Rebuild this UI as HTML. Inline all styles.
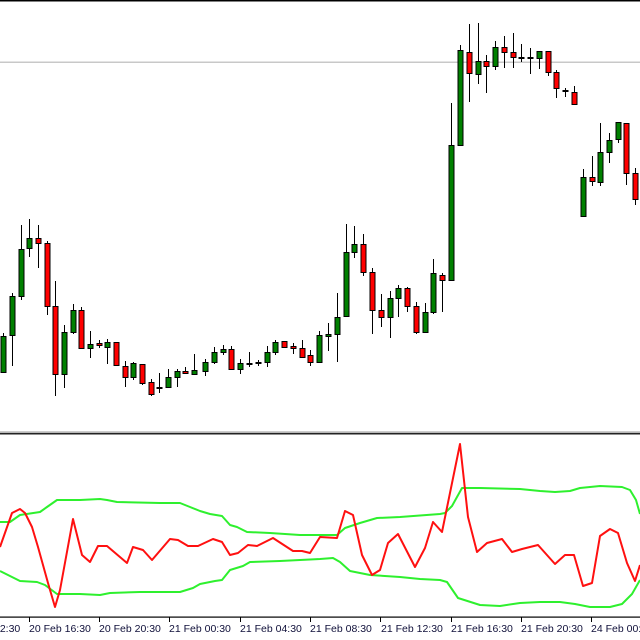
<!DOCTYPE html>
<html><head><meta charset="utf-8"><style>
html,body{margin:0;padding:0;background:#fff;width:640px;height:640px;overflow:hidden}
svg{display:block}
text{font-family:"Liberation Sans",sans-serif;font-size:10.5px;fill:#10103a}
</style></head><body>
<svg width="640" height="640" viewBox="0 0 640 640" xmlns="http://www.w3.org/2000/svg">
<rect x="0" y="0" width="640" height="1.5" fill="#000"/>
<rect x="0" y="61.5" width="640" height="1.5" fill="#c8c8c8"/>
<g stroke="#000" stroke-width="1" shape-rendering="crispEdges">
<path d="M3.5 333V373M12.5 293V366M21.5 225V300M29.5 219V257M38.5 225V268M47.5 241V315M55.5 281V396M64.5 325V388M73.5 304V334M81.5 307V349M90.5 331V358M99.5 340V348M107.5 339V364M116.5 342V365M125.5 361V387M133.5 362V380M142.5 364V385M151.5 379V396M159.5 373V393M168.5 369V388M177.5 369V387M185.5 367V374M194.5 354V375M205.5 359V376M214.5 347V364M223.5 345V355M231.5 346V369M240.5 359V374M249.5 352V367M258.5 360V366M267.5 346V367M275.5 340V355M284.5 341V347M293.5 343V354M302.5 340V357M310.5 350V366M319.5 331V362M328.5 323V351M337.5 293V362M346.5 224V316M354.5 226V258M363.5 234V276M372.5 268V334M381.5 294V327M390.5 291V338M398.5 285V317M407.5 287V312M416.5 302V334M425.5 303V332M433.5 259V314M442.5 273V312M451.5 103V280M460.5 45V145M469.5 24V102M478.5 23V84M486.5 55V93M495.5 41V70M504.5 36V68M513.5 33V68M521.5 44V62M530.5 48V74M539.5 51V69M548.5 51V76M556.5 70V98M565.5 88V97M574.5 86V105M583.5 169V217M592.5 156V186M600.5 123V186M609.5 133V163M618.5 122V143M626.5 123V185M635.5 168V205"/>
</g>
<g stroke="#000" stroke-width="1" fill="#008000" shape-rendering="crispEdges">
<rect x="1" y="336.5" width="5" height="36"/>
<rect x="10" y="296.5" width="5" height="39"/>
<rect x="19" y="249.5" width="5" height="47"/>
<rect x="27" y="238.5" width="5" height="10"/>
<rect x="62" y="332.5" width="5" height="42"/>
<rect x="71" y="310.5" width="5" height="22"/>
<rect x="88" y="344.5" width="5" height="4"/>
<rect x="105" y="342.5" width="5" height="5"/>
<rect x="131" y="363.5" width="5" height="14"/>
<rect x="157" y="387.5" width="5" height="1"/>
<rect x="166" y="377.5" width="5" height="10"/>
<rect x="175" y="371.5" width="5" height="6"/>
<rect x="192" y="370.5" width="5" height="4"/>
<rect x="203" y="362.5" width="5" height="9"/>
<rect x="212" y="352.5" width="5" height="10"/>
<rect x="221" y="349.5" width="5" height="3"/>
<rect x="238" y="363.5" width="5" height="6"/>
<rect x="247" y="363.5" width="5" height="1"/>
<rect x="256" y="362.5" width="5" height="1"/>
<rect x="265" y="352.5" width="5" height="10"/>
<rect x="273" y="342.5" width="5" height="10"/>
<rect x="317" y="335.5" width="5" height="27"/>
<rect x="326" y="334.5" width="5" height="2"/>
<rect x="335" y="317.5" width="5" height="17"/>
<rect x="344" y="252.5" width="5" height="64"/>
<rect x="352" y="244.5" width="5" height="8"/>
<rect x="388" y="298.5" width="5" height="19"/>
<rect x="396" y="288.5" width="5" height="10"/>
<rect x="423" y="312.5" width="5" height="20"/>
<rect x="431" y="273.5" width="5" height="39"/>
<rect x="449" y="145.5" width="5" height="135"/>
<rect x="458" y="50.5" width="5" height="95"/>
<rect x="476" y="61.5" width="5" height="13"/>
<rect x="493" y="47.5" width="5" height="19"/>
<rect x="519" y="57.5" width="5" height="1"/>
<rect x="537" y="51.5" width="5" height="7"/>
<rect x="563" y="90.5" width="5" height="1"/>
<rect x="581" y="177.5" width="5" height="39"/>
<rect x="598" y="152.5" width="5" height="30"/>
<rect x="607" y="140.5" width="5" height="12"/>
<rect x="616" y="122.5" width="5" height="17"/>
</g>
<g stroke="#000" stroke-width="1" fill="#ff0000" shape-rendering="crispEdges">
<rect x="36" y="238.5" width="5" height="5"/>
<rect x="45" y="243.5" width="5" height="63"/>
<rect x="53" y="306.5" width="5" height="68"/>
<rect x="79" y="310.5" width="5" height="38"/>
<rect x="97" y="343.5" width="5" height="2"/>
<rect x="114" y="342.5" width="5" height="23"/>
<rect x="123" y="366.5" width="5" height="11"/>
<rect x="140" y="364.5" width="5" height="19"/>
<rect x="149" y="382.5" width="5" height="12"/>
<rect x="183" y="371.5" width="5" height="2"/>
<rect x="229" y="349.5" width="5" height="20"/>
<rect x="282" y="341.5" width="5" height="6"/>
<rect x="291" y="346.5" width="5" height="2"/>
<rect x="300" y="348.5" width="5" height="9"/>
<rect x="308" y="355.5" width="5" height="7"/>
<rect x="361" y="244.5" width="5" height="28"/>
<rect x="370" y="272.5" width="5" height="38"/>
<rect x="379" y="310.5" width="5" height="7"/>
<rect x="405" y="288.5" width="5" height="18"/>
<rect x="414" y="306.5" width="5" height="26"/>
<rect x="440" y="275.5" width="5" height="5"/>
<rect x="467" y="52.5" width="5" height="21"/>
<rect x="484" y="61.5" width="5" height="5"/>
<rect x="502" y="47.5" width="5" height="5"/>
<rect x="511" y="52.5" width="5" height="5"/>
<rect x="528" y="57.5" width="5" height="1"/>
<rect x="546" y="51.5" width="5" height="21"/>
<rect x="554" y="72.5" width="5" height="16"/>
<rect x="572" y="92.5" width="5" height="12"/>
<rect x="590" y="177.5" width="5" height="4"/>
<rect x="624" y="123.5" width="5" height="50"/>
<rect x="633" y="173.5" width="5" height="26"/>
</g>
<rect x="0" y="431.5" width="640" height="1.2" fill="#9a9a9a"/>
<rect x="0" y="433" width="640" height="1.5" fill="#222"/>
<g fill="none" stroke-width="2" stroke-linejoin="round">
<polyline stroke="#2ef02e" points="0,522 10,522 20,515 40,512 47,507 57,500 80,500 100,499 107,500 117,502 160,503 180,503 190,507 200,511 210,514 222,516 230,525 237,527 247,532 270,533 300,535 320,535 337,535 345,528 360,523 377,518 400,517 440,514 445,513 452,506 462,488 480,488 520,489 540,491 555,492 570,491 580,488 600,486 622,487 630,490 636,500 640,514"/>
<polyline stroke="#2ef02e" points="0,571 20,581 37,582 45,585 57,594 80,594 100,595 110,593 140,592 180,592 193,588 200,584 215,581 222,580 230,570 243,566 250,562 280,561 300,560 320,559 333,558 340,562 350,571 370,575 400,577 420,579 440,580 447,582 458,598 480,605 500,606 520,603 540,602 560,602 575,604 590,607 610,607 622,604 632,594 640,580"/>
<polyline stroke="#ff1010" points="0,547 12,513 20,509 25,513 32,527 38,547 48,583 55,607 60,590 73,519 82,555 90,562 98,546 107,546 127,563 133,547 143,550 152,560 170,539 178,540 188,546 198,546 213,539 222,542 230,555 238,553 248,545 257,546 273,538 293,551 302,551 310,553 320,537 337,538 345,511 353,515 362,555 372,575 380,570 388,543 398,534 415,567 425,548 433,522 442,532 460,444 468,517 477,552 487,543 502,539 512,552 522,549 538,545 555,564 565,555 574,555 583,586 592,583 600,536 610,529 618,533 627,563 635,581 640,565"/>
</g>
<rect x="0" y="616.5" width="640" height="1.2" fill="#000"/>
<path d="M29.5 617V622M99.5 617V622M169.5 617V622M240.5 617V622M310.5 617V622M380.5 617V622M451.5 617V622M521.5 617V622M591.5 617V622" stroke="#000" stroke-width="1"/>
<text x="-6" y="632">12:30</text>
<text x="29" y="632">20 Feb 16:30</text>
<text x="99" y="632">20 Feb 20:30</text>
<text x="169" y="632">21 Feb 00:30</text>
<text x="240" y="632">21 Feb 04:30</text>
<text x="310" y="632">21 Feb 08:30</text>
<text x="381" y="632">21 Feb 12:30</text>
<text x="451" y="632">21 Feb 16:30</text>
<text x="521" y="632">21 Feb 20:30</text>
<text x="591" y="632">24 Feb 00:30</text>
</svg>
</body></html>
